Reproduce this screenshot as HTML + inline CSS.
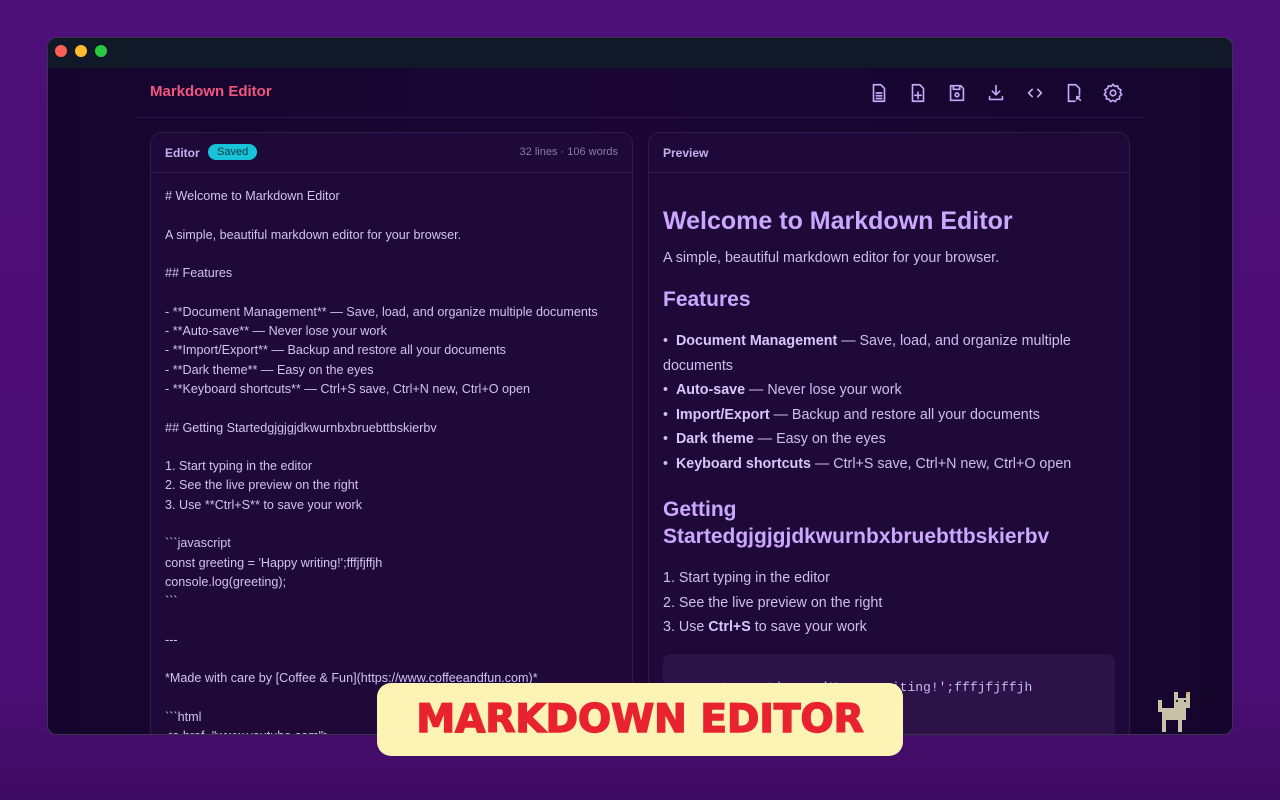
<!DOCTYPE html>
<html><head><meta charset="utf-8"><style>
*{margin:0;padding:0;box-sizing:border-box}
body{width:1280px;height:800px;overflow:hidden;background:linear-gradient(180deg,#4d0f78 0%,#4a0e74 85%,#3e0b62 100%);font-family:"Liberation Sans",sans-serif;position:relative}
.win{position:absolute;left:47px;top:37px;width:1186px;height:698px;border-radius:10px;overflow:hidden;background:#170530;border:1px solid #3a3448}
.tb{height:30px;background:#111827;position:relative}
.dot{position:absolute;top:7px;width:12px;height:12px;border-radius:50%}
.app{position:absolute;top:30px;left:0;right:0;bottom:0;background:linear-gradient(90deg,#15052c,#1b0636 50%,#15052c)}
.hdr{position:absolute;left:88px;right:88px;top:0;height:50px;border-bottom:1px solid #2e1748}
.title{position:absolute;left:14px;top:15px;color:#f0567f;font-weight:bold;font-size:15px}
.icons{position:absolute;right:20px;top:14px;display:flex;gap:17px}
.icons svg{width:22px;height:22px}
.panel{position:absolute;top:64px;height:660px;background:#1f0938;border:1px solid #2f1a4a;border-radius:12px;overflow:hidden}
.ph{height:40px;border-bottom:1px solid #2f1a4a;position:relative;color:#c4b0f0;font-size:12px;font-weight:bold}
.ed{padding:14px 14px;color:#d2c2f2;font-size:12.6px;line-height:19.3px;white-space:pre}
.pv{padding:24px 14px;color:#cdbdf0;font-size:14.3px}
.pv h1{color:#c9a8ff;font-size:25px;margin:10px 0 14px}
.pv h2{color:#c9a8ff;font-size:21px;margin:20px 0 16px;line-height:27px}
.pv p{margin-bottom:10px}
.pv ul,.pv ol{list-style:none}
.pv li{line-height:24.5px}
.pv b{color:#d9c6ff}
.code{margin-top:14px;background:#2b1347;border-radius:8px;height:100px;padding:26px;font-family:"Liberation Mono",monospace;font-size:13px;color:#c9b8ee}
.banner{position:absolute;left:377px;top:683px;width:526px;height:73px;background:#fdf3b5;border-radius:14px;color:#e8232f;font-weight:900;font-size:39px;text-align:center;line-height:73px;-webkit-text-stroke:1.5px #e8232f;font-family:"DejaVu Sans","Liberation Sans",sans-serif}
</style></head><body>
<div class="win">
<div class="tb"><div class="dot" style="left:7px;background:#fe5f57"></div><div class="dot" style="left:27px;background:#febc2e"></div><div class="dot" style="left:47px;background:#28c840"></div></div>
<div class="app">
<div class="hdr"><div class="title">Markdown Editor</div>
<div class="icons" style="stroke:#c4a8f5;fill:none;stroke-width:1.8;stroke-linecap:round;stroke-linejoin:round">
<svg viewBox="0 0 24 24"><path d="M6 3h8l4 4v14H6z M9 12h6M9 15h6M9 18h6"/></svg>
<svg viewBox="0 0 24 24"><path d="M6 3h8l4 4v14H6z M12 11v7M8.5 14.5h7"/></svg>
<svg viewBox="0 0 24 24"><path d="M5 4h11l3 3v13H5z M8 4v4h7V4"/><circle cx="12" cy="14" r="2"/></svg>
<svg viewBox="0 0 24 24"><path d="M12 4v10M8 10l4 4 4-4M5 16v3h14v-3"/></svg>
<svg viewBox="0 0 24 24"><path d="M9 8l-4 4 4 4M15 8l4 4-4 4"/></svg>
<svg viewBox="0 0 24 24"><path d="M13 21H6V3h8l4 4v7M15 16l4 4M15 16v3M15 16h3"/></svg>
<svg viewBox="0 0 24 24"><circle cx="12" cy="12" r="3"/><path d="M12 2.5l2 2.3 3-.6.9 2.9 2.8 1.3-.9 2.9 1.7 2.5-2.4 1.8.1 3-3 .3-1.6 2.6-2.6-1.5-2.6 1.5-1.6-2.6-3-.3.1-3-2.4-1.8 1.7-2.5-.9-2.9 2.8-1.3.9-2.9 3 .6z"/></svg>
</div></div>
<div class="panel" style="left:102px;width:483px">
<div class="ph"><span style="position:absolute;left:14px;top:13px">Editor</span><span style="position:absolute;left:57px;top:11px;background:#18c3d8;color:#0d3a44;font-weight:normal;font-size:11px;padding:2px 9px;border-radius:9px">Saved</span><span style="position:absolute;right:14px;top:13px;font-weight:normal;color:#8c78b0;font-size:11px">32 lines · 106 words</span></div>
<div class="ed"># Welcome to Markdown Editor

A simple, beautiful markdown editor for your browser.

## Features

- **Document Management** — Save, load, and organize multiple documents
- **Auto-save** — Never lose your work
- **Import/Export** — Backup and restore all your documents
- **Dark theme** — Easy on the eyes
- **Keyboard shortcuts** — Ctrl+S save, Ctrl+N new, Ctrl+O open

## Getting Startedgjgjgjdkwurnbxbruebttbskierbv

1. Start typing in the editor
2. See the live preview on the right
3. Use **Ctrl+S** to save your work

&#96;&#96;&#96;javascript
const greeting = 'Happy writing!';fffjfjffjh
console.log(greeting);
&#96;&#96;&#96;

---

*Made with care by [Coffee &amp; Fun](https://www.coffeeandfun.com)*

&#96;&#96;&#96;html
&lt;a href="www.youtube.com"&gt;</div>
</div>
<div class="panel" style="left:600px;width:482px">
<div class="ph"><span style="position:absolute;left:14px;top:13px">Preview</span></div>
<div class="pv">
<h1>Welcome to Markdown Editor</h1>
<p>A simple, beautiful markdown editor for your browser.</p>
<h2>Features</h2>
<ul>
<li>• &nbsp;<b>Document Management</b> — Save, load, and organize multiple documents</li>
<li>• &nbsp;<b>Auto-save</b> — Never lose your work</li>
<li>• &nbsp;<b>Import/Export</b> — Backup and restore all your documents</li>
<li>• &nbsp;<b>Dark theme</b> — Easy on the eyes</li>
<li>• &nbsp;<b>Keyboard shortcuts</b> — Ctrl+S save, Ctrl+N new, Ctrl+O open</li>
</ul>
<h2>Getting Startedgjgjgjdkwurnbxbruebttbskierbv</h2>
<ol><li>1. Start typing in the editor</li><li>2. See the live preview on the right</li><li>3. Use <b>Ctrl+S</b> to save your work</li></ol>
<div class="code"><span style="color:#e8853a">const</span> greeting = 'Happy writing!';fffjfjffjh</div>
</div></div>
<svg style="position:absolute;left:1106px;top:620px" width="52" height="46" viewBox="0 0 26 23" shape-rendering="crispEdges"><g fill="#c8c0a8"><rect x="10" y="2" width="2" height="3"/><rect x="16" y="2" width="2" height="3"/><rect x="10" y="5" width="8" height="5"/><rect x="4" y="10" width="12" height="6"/><rect x="2" y="6" width="2" height="6"/><rect x="4" y="16" width="2" height="6"/><rect x="12" y="16" width="2" height="6"/></g><rect x="11" y="6" width="1" height="1" fill="#222"/><rect x="15" y="6" width="1" height="1" fill="#222"/><rect x="16" y="2" width="1" height="1" fill="#e09040"/></svg>
</div></div>
<div class="banner">MARKDOWN EDITOR</div>
</body></html>
